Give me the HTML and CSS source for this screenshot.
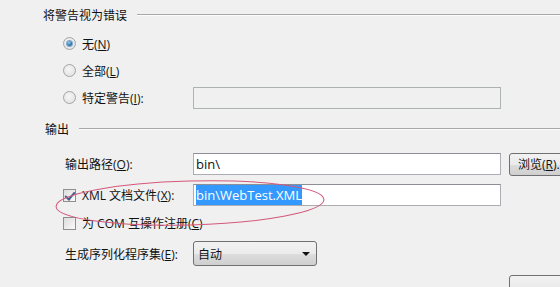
FILE: index.html
```html
<!DOCTYPE html>
<html lang="zh-CN">
<head>
    <meta charset="UTF-8">
    <title>生成</title>
    <link rel="stylesheet" href="styles.css">
</head>
<body>
    <div class="page">
        <div class="group-title first"><span>将警告视为错误</span></div>

        <div class="option">
            <span class="radio checked"></span>
            <span>无(<u>N</u>)</span>
        </div>
        <div class="option">
            <span class="radio"></span>
            <span>全部(<u>L</u>)</span>
        </div>
        <div class="option">
            <span class="radio"></span>
            <span class="opt-label">特定警告(<u>I</u>):</span>
            <div class="textbox disabled"></div>
        </div>

        <div class="group-title second"><span>输出</span></div>

        <div class="field path-row">
            <span class="label">输出路径(<u>O</u>):</span>
            <div class="textbox">bin\</div>
            <button class="btn">浏览(<u>R</u>)...</button>
        </div>
        <div class="field xml-row">
            <span class="label check-label"><span class="checkbox checked"></span>XML 文档文件(<u>X</u>):</span>
            <div class="textbox"><span class="selected">bin\WebTest.XML</span></div>
        </div>
        <div class="field com-row">
            <span class="label check-label"><span class="checkbox"></span>为 COM 互操作注册(<u>C</u>)</span>
        </div>
        <div class="field select-row">
            <span class="label">生成序列化程序集(<u>E</u>):</span>
            <div class="select">自动<span class="arrow"></span></div>
        </div>
        <div class="field last-row">
            <button class="btn btn-low"></button>
        </div>

        <svg class="mark" width="280" height="60" viewBox="0 0 280 60">
            <ellipse cx="139" cy="24" rx="134" ry="22" transform="rotate(-1.5 139 24)" fill="none" stroke="#d4587a" stroke-width="1"/>
        </svg>
    </div>
</body>
</html>
```

FILE: styles.css
```css
* {
    margin: 0;
    padding: 0;
    box-sizing: border-box;
}

body {
    background: #f0f0f0;
    color: #111;
    font-family: "Segoe UI", "Open Sans", "Noto Sans CJK SC", sans-serif;
    font-size: 12px;
    overflow: hidden;
}

.page {
    position: relative;
    width: 560px;
    height: 287px;
    overflow: hidden;
}

u {
    text-decoration: underline;
    text-underline-offset: 1px;
}

.group-title {
    display: flex;
    align-items: center;
    gap: 10px;
    height: 30px;
    padding-left: 43px;
}

.group-title.second {
    height: 26px;
    margin-top: 5px;
    padding-left: 45px;
}

.group-title::after {
    content: "";
    flex: 1;
    border-top: 1px solid #a8a8a8;
    border-bottom: 1px solid #fbfbfb;
}

.option {
    display: flex;
    align-items: center;
    height: 27px;
    padding-left: 63px;
}

.option:first-of-type {
    margin-top: 4px;
}

.radio {
    flex-shrink: 0;
    width: 13px;
    height: 13px;
    margin-right: 6px;
    border-radius: 50%;
    border: 1px solid #a4a4a4;
    background: radial-gradient(circle at 45% 40%, #f6f6f6 0%, #dedede 100%);
    display: flex;
    align-items: center;
    justify-content: center;
}

.radio.checked::after {
    content: "";
    width: 5px;
    height: 5px;
    border-radius: 50%;
    background: radial-gradient(circle at 40% 35%, #9ad0f5 0%, #2a6ea8 60%, #1b4f7c 100%);
    box-shadow: 0 0 0 1px #7fa9cc;
}

.opt-label {
    width: 111px;
    flex-shrink: 0;
}

.textbox {
    flex-shrink: 0;
    width: 308px;
    height: 22px;
    background: #fff;
    border: 1px solid #abadb3;
    border-top-color: #8c8f96;
    padding: 2px 2px;
    line-height: 16px;
    font-size: 13px;
}

.textbox.disabled {
    background: #f0f0f0;
    border-color: #adb2b5;
}

.selected {
    background: #3399ff;
    color: #fff;
    padding: 1px 0;
}

.field {
    display: flex;
    align-items: center;
    height: 22px;
    padding-left: 63px;
}

.path-row {
    margin-top: 11px;
}

.xml-row {
    margin-top: 9px;
}

.com-row {
    margin-top: 6px;
}

.select-row {
    height: 25px;
    margin-top: 7px;
}

.last-row {
    height: 24px;
    margin-top: 8px;
}

.label {
    width: 130px;
    padding-left: 2px;
    flex-shrink: 0;
}

.check-label {
    display: flex;
    align-items: center;
    padding-left: 0;
    white-space: nowrap;
}

.checkbox {
    flex-shrink: 0;
    width: 13px;
    height: 13px;
    margin-right: 6px;
    border: 1px solid #8f8f8f;
    background: linear-gradient(135deg, #dcdcdc, #fbfbfb);
    position: relative;
}

.checkbox.checked::after {
    content: "";
    position: absolute;
    left: 3px;
    top: 0;
    width: 4px;
    height: 8px;
    border-right: 2px solid #3b5f8c;
    border-bottom: 2px solid #3b5f8c;
    transform: rotate(40deg);
}

.btn {
    flex-shrink: 0;
    width: 70px;
    height: 23px;
    margin-left: 8px;
    border: 1px solid #707070;
    border-radius: 3px;
    background: linear-gradient(#f2f2f2 0%, #ebebeb 50%, #dddddd 51%, #cfcfcf 100%);
    font-family: inherit;
    font-size: 12px;
    text-align: left;
    padding-left: 8px;
    color: #111;
}

.btn-low {
    margin-left: 446px;
}

.select {
    flex-shrink: 0;
    width: 124px;
    height: 25px;
    border: 1px solid #707070;
    border-radius: 3px;
    background: linear-gradient(#f2f2f2 0%, #ebebeb 50%, #dddddd 51%, #cfcfcf 100%);
    display: flex;
    align-items: center;
    justify-content: space-between;
    padding: 0 6px 0 4px;
}

.arrow {
    width: 0;
    height: 0;
    border-left: 4px solid transparent;
    border-right: 4px solid transparent;
    border-top: 4px solid #111;
}

.mark {
    position: absolute;
    left: 51px;
    top: 179px;
    pointer-events: none;
}
```
